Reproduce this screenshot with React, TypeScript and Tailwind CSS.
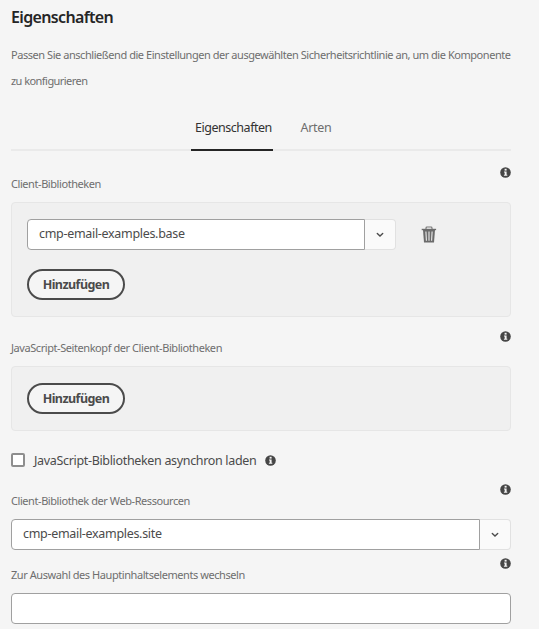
import type { ReactNode } from 'react';

function InfoIcon() {
  return (
    <svg width="11" height="11" viewBox="0 0 11 11" className="block shrink-0">
      <circle cx="5.5" cy="5.5" r="5.3" fill="#464646" />
      <rect x="4.6" y="1.8" width="2" height="1.8" fill="#f4f4f4" />
      <path d="M4 4.6h2.6v3.2h.7v1H3.9v-1h.8V5.5H4z" fill="#f4f4f4" />
    </svg>
  );
}

function ChevronIcon() {
  return (
    <svg width="8" height="6" viewBox="0 0 8 6" className="block">
      <path d="M1.3 1.6 4 4.1l2.7-2.5" fill="none" stroke="#4b4b4b" strokeWidth="1.4" strokeLinecap="round" />
    </svg>
  );
}

function TrashIcon() {
  return (
    <svg width="16" height="17" viewBox="0 0 16 17" className="block">
      <path d="M5 3V1.9Q5 1 6 1h4q1 0 1 .9V3" fill="none" stroke="#777" strokeWidth="1.1" />
      <rect x="0.7" y="2.8" width="14.4" height="1.4" fill="#6b6b6b" />
      <path d="M2 4h12l-1 12.6H3z" fill="#6b6b6b" />
      <path d="m4.9 5.5.5 9.3M8 5.5v9.3m3.1-9.3-.5 9.3" stroke="#ededed" strokeWidth="1.1" />
    </svg>
  );
}

function FieldLabel({ children }: { children: ReactNode }) {
  return (
    <div className="flex h-[29px] justify-between pr-[0.5px]">
      <span className="mt-[7px] h-5 text-[11px] leading-5 tracking-[-0.43px] whitespace-nowrap text-[#6e6e6e]">
        {children}
      </span>
      <InfoIcon />
    </div>
  );
}

function ComboBox({ value, className }: { value: string; className: string }) {
  return (
    <div className={`flex h-[31px] ${className}`}>
      <div className="flex flex-1 items-center rounded-l border border-[#a0a0a0] bg-white pb-px pl-[11px] text-[12.5px] tracking-[-0.31px] text-[#4b4b4b]">
        {value}
      </div>
      <button className="flex w-[31px] items-center justify-center rounded-r border border-l-0 border-[#e1e1e1] bg-[#fafafa]">
        <ChevronIcon />
      </button>
    </div>
  );
}

function AddButton() {
  return (
    <button className="flex h-[31px] w-[98px] items-center justify-center rounded-full border-2 border-[#4b4b4b] bg-[#f5f5f5] pt-px text-[12.5px] font-bold tracking-[-0.55px] text-[#4b4b4b]">
      Hinzufügen
    </button>
  );
}

export default function App() {
  return (
    <main className="h-[629px] w-[539px] overflow-hidden bg-[#f5f5f5] pr-7 pl-[11px] font-['Noto_Sans',sans-serif]">
      <h1 className="h-[42px] pt-[5px] text-[16px] leading-[25px] font-semibold tracking-[-0.65px] text-[#252525]">
        Eigenschaften
      </h1>
      <p className="h-[68px] text-[11px] leading-[26px] tracking-[-0.45px] whitespace-nowrap text-[#6e6e6e]">
        Passen Sie anschließend die Einstellungen der ausgewählten Sicherheitsrichtlinie an, um die Komponente
        <br />
        <span className="tracking-[-0.55px]">zu konfigurieren</span>
      </p>
      <nav className="flex h-[41px] border-b-2 border-[#eaeaea] text-[12.5px] leading-[36px]">
        <div className="-mb-0.5 ml-[180px] w-[82px] border-b-2 border-[#252525] pl-1 tracking-[-0.47px] text-[#323232]">
          Eigenschaften
        </div>
        <div className="w-[86px] text-center tracking-[-0.3px] text-[#6e6e6e]">Arten</div>
      </nav>

      <section className="mt-4">
        <FieldLabel>Client-Bibliotheken</FieldLabel>
        <div className="mt-[6px] h-[115px] rounded border border-[#e6e6e6] bg-[#f0f0f0] px-[15px] pt-4">
          <div className="flex items-center">
            <ComboBox value="cmp-email-examples.base" className="w-[369px]" />
            <button className="ml-[25px]"><TrashIcon /></button>
          </div>
          <div className="mt-[19px]"><AddButton /></div>
        </div>
      </section>

      <section className="mt-[14px]">
        <FieldLabel>JavaScript-Seitenkopf der Client-Bibliotheken</FieldLabel>
        <div className="mt-[6px] h-[65px] rounded border border-[#e6e6e6] bg-[#f0f0f0] px-[15px] pt-4">
          <AddButton />
        </div>
      </section>

      <div className="mt-[19px] flex h-5 items-center">
        <span className="size-[14px] rounded-xs border-2 border-[#8e8e8e] bg-white" />
        <span className="ml-[9px] pt-[2px] text-[12.5px] tracking-[-0.33px] whitespace-nowrap text-[#4b4b4b]">
          JavaScript-Bibliotheken asynchron laden
        </span>
        <span className="ml-[9px]"><InfoIcon /></span>
      </div>

      <section className="mt-[14px]">
        <FieldLabel>Client-Bibliothek der Web-Ressourcen</FieldLabel>
        <ComboBox value="cmp-email-examples.site" className="mt-[6px]" />
      </section>
      <section className="mt-2">
        <FieldLabel>Zur Auswahl des Hauptinhaltselements wechseln</FieldLabel>
        <div className="mt-[6px] h-[31px] rounded border border-[#a0a0a0] bg-white" />
      </section>
    </main>
  );
}
